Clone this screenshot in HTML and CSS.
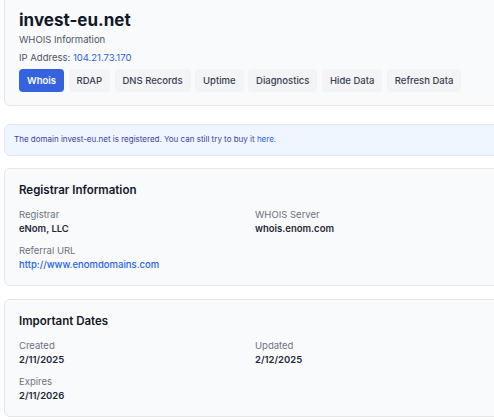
FILE: index.html
```html
<!DOCTYPE html>
<html>
<head>
<meta charset="utf-8">
<link rel="stylesheet" href="styles.css">
</head>
<body>
<div class="page">
  <section class="card header">
    <h1 class="title">invest-eu.net</h1>
    <p class="subtitle">WHOIS Information</p>
    <p class="ip">IP Address: <a class="link" href="#">104.21.73.170</a></p>
    <nav class="tabs">
      <button class="tab active">Whois</button>
      <button class="tab">RDAP</button>
      <button class="tab">DNS Records</button>
      <button class="tab">Uptime</button>
      <button class="tab">Diagnostics</button>
      <button class="tab">Hide Data</button>
      <button class="tab">Refresh Data</button>
    </nav>
  </section>

  <div class="alert">The domain invest-eu.net is registered. You can still try to buy it <a class="alert-link" href="#">here</a>.</div>

  <section class="card info">
    <h2 class="card-title">Registrar Information</h2>
    <div class="grid">
      <div class="field">
        <div class="label">Registrar</div>
        <div class="value">eNom, LLC</div>
      </div>
      <div class="field">
        <div class="label">WHOIS Server</div>
        <div class="value">whois.enom.com</div>
      </div>
      <div class="field">
        <div class="label">Referral URL</div>
        <a class="value link" href="#">http://www.enomdomains.com</a>
      </div>
    </div>
  </section>

  <section class="card info">
    <h2 class="card-title">Important Dates</h2>
    <div class="grid">
      <div class="field">
        <div class="label">Created</div>
        <div class="value">2/11/2025</div>
      </div>
      <div class="field">
        <div class="label">Updated</div>
        <div class="value">2/12/2025</div>
      </div>
      <div class="field">
        <div class="label">Expires</div>
        <div class="value">2/11/2026</div>
      </div>
    </div>
  </section>
</div>
</body>
</html>
```

FILE: styles.css
```css
html, body {
  margin: 0;
  padding: 0;
  background: #ffffff;
  overflow: hidden;
}
body {
  font-family: Inter, "Noto Sans", "Liberation Sans", sans-serif;
  color: #111827;
}
.page {
  width: 504px;
  padding: 0 0 0 4px;
  display: flex;
  flex-direction: column;
}
.card {
  background: #f9fafb;
  border: 1px solid #e5e7eb;
  border-radius: 6px;
}
.header {
  margin-top: -10px;
  padding: 18px 14px 13px;
}
.title {
  margin: 0;
  font-size: 17px;
  line-height: 22px;
  font-weight: 700;
  color: #111827;
}
.subtitle {
  margin: 2px 0 0;
  font-size: 9.5px;
  line-height: 13px;
  color: #4b5563;
}
.ip {
  margin: 5px 0 0;
  font-size: 9.5px;
  line-height: 13px;
  color: #4b5563;
}
.link {
  color: #2563eb;
  text-decoration: none;
}
.tabs {
  display: flex;
  gap: 4.5px;
  margin-top: 5px;
}
.tab {
  font-family: inherit;
  font-size: 9.5px;
  font-weight: 500;
  height: 23px;
  padding: 0 8px;
  border: none;
  border-radius: 4px;
  background: #f3f4f6;
  color: #374151;
}
.tab.active {
  background: #3563e0;
  color: #ffffff;
  font-weight: 600;
}
.alert {
  margin-top: 18px;
  background: #eff6ff;
  border: 1px solid #dbeafe;
  border-radius: 6px;
  padding: 9px 9px 10px;
  font-size: 8px;
  line-height: 11px;
  color: #3b3f9c;
}
.alert-link {
  color: #2563eb;
  text-decoration: none;
}
.info {
  margin-top: 12px;
  padding: 13px 14px 13px;
}
.info + .info {
  margin-top: 13px;
}
.card-title {
  margin: 0;
  font-size: 11.5px;
  line-height: 16px;
  font-weight: 600;
  color: #111827;
}
.grid {
  display: grid;
  grid-template-columns: 220px 1fr;
  column-gap: 16px;
  row-gap: 8px;
  margin-top: 10px;
}
.field {
  display: flex;
  flex-direction: column;
}
.label {
  font-size: 9.5px;
  line-height: 13px;
  color: #6b7280;
}
.value {
  font-size: 9.5px;
  line-height: 15px;
  font-weight: 600;
  color: #1f2937;
}
a.value.link {
  color: #2563eb;
  font-weight: 500;
}
```
